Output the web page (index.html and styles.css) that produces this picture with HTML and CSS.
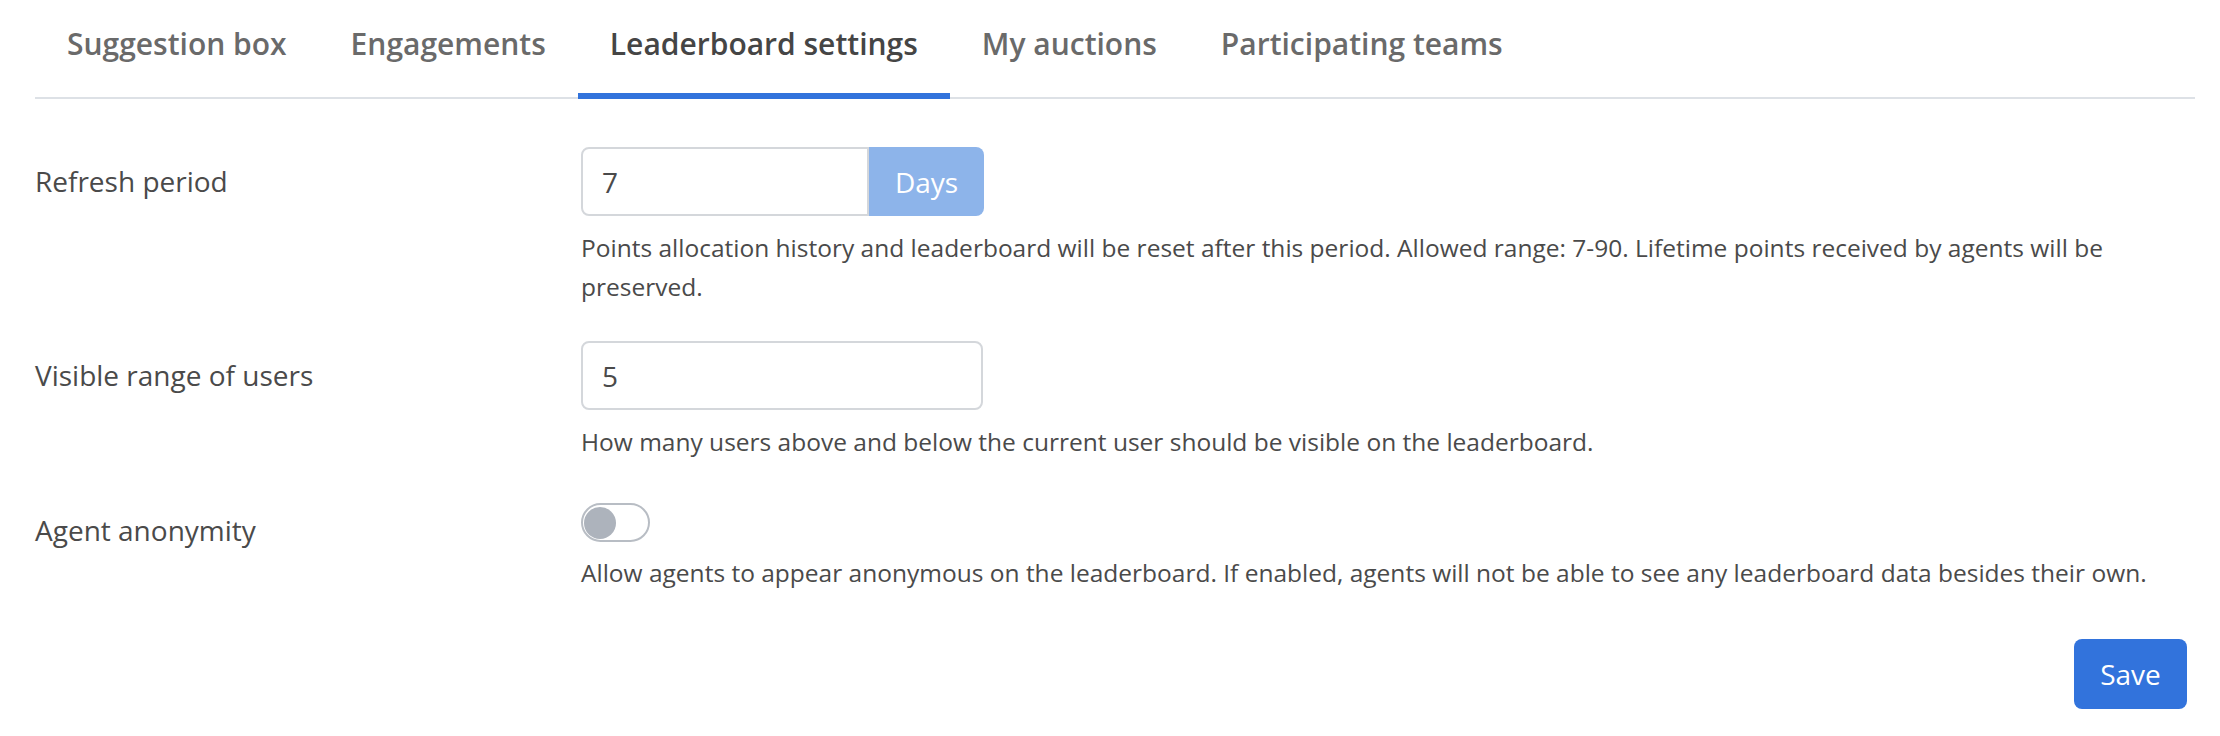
FILE: index.html
```html
<!DOCTYPE html>
<html lang="en">
<head>
<meta charset="utf-8">
<title>Leaderboard settings</title>
<link rel="stylesheet" href="styles.css">
</head>
<body>
<div class="page">
  <nav class="tabs">
    <ul>
      <li><a href="#">Suggestion box</a></li>
      <li><a href="#">Engagements</a></li>
      <li class="is-active"><a href="#">Leaderboard settings</a></li>
      <li><a href="#">My auctions</a></li>
      <li><a href="#">Participating teams</a></li>
    </ul>
  </nav>

  <form class="settings">
    <div class="field">
      <label class="field-label">Refresh period</label>
      <div class="field-body">
        <div class="addons">
          <input class="input input-addon" type="text" value="7">
          <span class="addon">Days</span>
        </div>
        <p class="help">Points allocation history and leaderboard will be reset after this period. Allowed range: 7-90. Lifetime points received by agents will be preserved.</p>
      </div>
    </div>

    <div class="field">
      <label class="field-label">Visible range of users</label>
      <div class="field-body">
        <input class="input" type="text" value="5">
        <p class="help">How many users above and below the current user should be visible on the leaderboard.</p>
      </div>
    </div>

    <div class="field field-last">
      <label class="field-label">Agent anonymity</label>
      <div class="field-body">
        <span class="toggle"><span class="knob"></span></span>
        <p class="help help-toggle">Allow agents to appear anonymous on the leaderboard. If enabled, agents will not be able to see any leaderboard data besides their own.</p>
      </div>
    </div>

    <div class="actions">
      <button type="button" class="btn-save">Save</button>
    </div>
  </form>
</div>
</body>
</html>
```

FILE: styles.css
```css
* {
  box-sizing: border-box;
}

html, body {
  margin: 0;
  padding: 0;
  background: #ffffff;
}

body {
  font-family: "Open Sans", "Liberation Sans", sans-serif;
  color: #4a4a4a;
}

.page {
  padding: 0 25px 0 35px;
}

/* Tabs */
.tabs ul {
  display: flex;
  margin: 0;
  padding: 0;
  list-style: none;
  border-bottom: 2px solid #dde1e6;
}

.tabs li {
  margin-bottom: -2px;
}

.tabs a {
  display: block;
  padding: 0 32px 6px;
  line-height: 87px;
  font-size: 30px;
  font-weight: 600;
  color: #6a6a6a;
  text-decoration: none;
  border-bottom: 6px solid transparent;
  white-space: nowrap;
}

.tabs li.is-active a {
  color: #454545;
  border-bottom-color: #3273dc;
}

/* Form */
.settings {
  padding-top: 48px;
}

.field {
  display: grid;
  grid-template-columns: 546px 1fr;
  margin-bottom: 35px;
}

.field-last {
  margin-bottom: 47px;
}

.field-label {
  font-size: 28px;
  line-height: 69px;
  color: #4a4a4a;
}

.addons {
  display: flex;
  width: 403px;
  height: 69px;
}

.input {
  display: block;
  width: 402px;
  height: 69px;
  margin: 0;
  padding: 0 19px;
  font-family: inherit;
  font-size: 28px;
  color: #4a4a4a;
  background: #ffffff;
  border: 2px solid #d4d7db;
  border-radius: 8px;
  outline: none;
}

.input-addon {
  width: 288px;
  border-radius: 8px 0 0 8px;
}

.addon {
  display: flex;
  align-items: center;
  justify-content: center;
  width: 115px;
  height: 69px;
  font-size: 28px;
  color: #ffffff;
  background: #8db4ea;
  border-radius: 0 8px 8px 0;
}

.help {
  margin: 12px 0 0;
  font-size: 24.5px;
  line-height: 39px;
  color: #4a4a4a;
}

.help-toggle {
  margin-top: 11px;
}

/* Toggle */
.toggle {
  position: relative;
  display: block;
  width: 69px;
  height: 39px;
  margin-top: 7px;
  border: 2px solid #b8bdc4;
  border-radius: 20px;
  background: #ffffff;
}

.knob {
  position: absolute;
  left: 1px;
  top: 1.5px;
  width: 32px;
  height: 32px;
  border-radius: 50%;
  background: #adb3bc;
}

/* Actions */
.actions {
  display: flex;
  justify-content: flex-end;
}

.btn-save {
  width: 113px;
  height: 70px;
  margin-right: 8px;
  font-family: inherit;
  font-size: 28px;
  color: #ffffff;
  background: #3273dc;
  border: none;
  border-radius: 8px;
  cursor: pointer;
}
```
